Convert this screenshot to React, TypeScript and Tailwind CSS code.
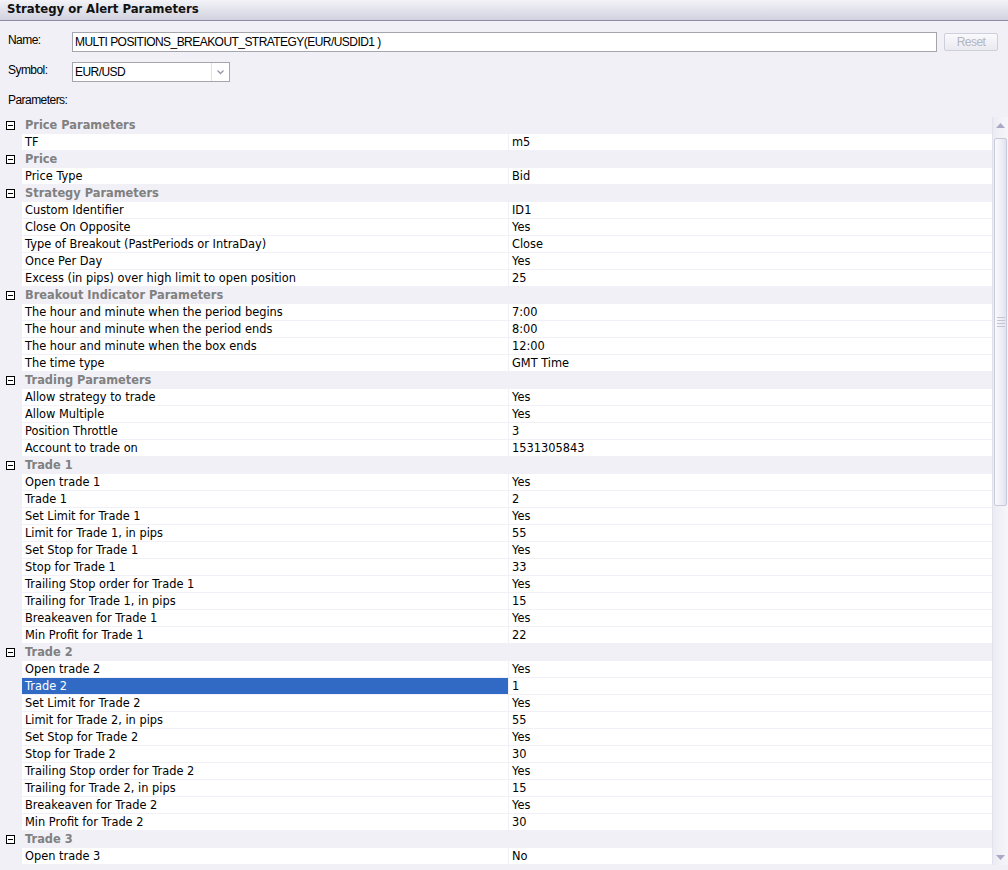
import React from "react";

type Row = { cat: string } | { label: string; value: string; selected?: boolean };

const rows: Row[] = [
  { cat: "Price Parameters" },
  { label: "TF", value: "m5" },
  { cat: "Price" },
  { label: "Price Type", value: "Bid" },
  { cat: "Strategy Parameters" },
  { label: "Custom Identifier", value: "ID1" },
  { label: "Close On Opposite", value: "Yes" },
  { label: "Type of Breakout (PastPeriods or IntraDay)", value: "Close" },
  { label: "Once Per Day", value: "Yes" },
  { label: "Excess (in pips) over high limit to open position", value: "25" },
  { cat: "Breakout Indicator Parameters" },
  { label: "The hour and minute when the period begins", value: "7:00" },
  { label: "The hour and minute when the period ends", value: "8:00" },
  { label: "The hour and minute when the box ends", value: "12:00" },
  { label: "The time type", value: "GMT Time" },
  { cat: "Trading Parameters" },
  { label: "Allow strategy to trade", value: "Yes" },
  { label: "Allow Multiple", value: "Yes" },
  { label: "Position Throttle", value: "3" },
  { label: "Account to trade on", value: "1531305843" },
  { cat: "Trade 1" },
  { label: "Open trade 1", value: "Yes" },
  { label: "Trade 1", value: "2" },
  { label: "Set Limit for Trade 1", value: "Yes" },
  { label: "Limit for Trade 1, in pips", value: "55" },
  { label: "Set Stop for Trade 1", value: "Yes" },
  { label: "Stop for Trade 1", value: "33" },
  { label: "Trailing Stop order for Trade 1", value: "Yes" },
  { label: "Trailing for Trade 1, in pips", value: "15" },
  { label: "Breakeaven for Trade 1", value: "Yes" },
  { label: "Min Profit for Trade 1", value: "22" },
  { cat: "Trade 2" },
  { label: "Open trade 2", value: "Yes" },
  { label: "Trade 2", value: "1", selected: true },
  { label: "Set Limit for Trade 2", value: "Yes" },
  { label: "Limit for Trade 2, in pips", value: "55" },
  { label: "Set Stop for Trade 2", value: "Yes" },
  { label: "Stop for Trade 2", value: "30" },
  { label: "Trailing Stop order for Trade 2", value: "Yes" },
  { label: "Trailing for Trade 2, in pips", value: "15" },
  { label: "Breakeaven for Trade 2", value: "Yes" },
  { label: "Min Profit for Trade 2", value: "30" },
  { cat: "Trade 3" },
  { label: "Open trade 3", value: "No" },
];

const narrow = { fontFamily: '"Liberation Sans", Arial, sans-serif' };
const grid = { fontFamily: '"DejaVu Sans", Verdana, sans-serif' };

function MinusBox() {
  return (
    <div className="w-[9px] h-[9px] border border-black bg-white flex items-center justify-center">
      <div className="w-[5px] h-px bg-black" />
    </div>
  );
}

function Scrollbar() {
  return (
    <div className="w-[16px] flex flex-col bg-gradient-to-r from-[#ebebf3] to-[#f6f6fa] border-l border-[#e2e2ec]">
      <div className="h-[16px] flex items-center justify-center">
        <svg width="9" height="5" viewBox="0 0 9 5">
          <path d="M4.5 0 L9 5 L0 5 Z" fill="#a9a9c6" />
        </svg>
      </div>
      <div className="h-[5px]" />
      <div className="h-[368px] mx-[1px] rounded-[2px] border border-[#c9c9dc] bg-gradient-to-r from-[#fbfbfd] to-[#e3e3ee] flex flex-col items-center justify-center gap-[2px]">
        <div className="w-[8px] h-px bg-[#c3c3d6]" />
        <div className="w-[8px] h-px bg-[#c3c3d6]" />
        <div className="w-[8px] h-px bg-[#c3c3d6]" />
        <div className="w-[8px] h-px bg-[#c3c3d6]" />
      </div>
      <div className="flex-1" />
      <div className="h-[16px] flex items-center justify-center">
        <svg width="9" height="5" viewBox="0 0 9 5">
          <path d="M0 0 L9 0 L4.5 5 Z" fill="#a9a9c6" />
        </svg>
      </div>
    </div>
  );
}

export default function App() {
  return (
    <div className="w-[1008px] h-[870px] bg-[#f1f0f6] flex flex-col overflow-hidden text-black">
      {/* Titre */}
      <div
        className="h-[21px] shrink-0 bg-gradient-to-b from-[#f3f3f8] to-[#d2d2df] border-b border-[#8d8ca8] flex items-center px-[7px] text-[11.7px] font-bold text-[#111]"
        style={{ fontFamily: '"DejaVu Sans", Tahoma, sans-serif' }}
      >
        Strategy or Alert Parameters
      </div>

      {/* Name */}
      <div className="flex items-center mt-[11px] h-[20px] text-[12px] tracking-[-0.55px]" style={narrow}>
        <div className="w-[72px] pl-[8px] -mt-[4px]">Name:</div>
        <div className="w-[865px] h-[20px] bg-white border border-[#a5a5ad] flex items-center pl-[2px]">
          MULTI POSITIONS_BREAKOUT_STRATEGY(EUR/USDID1 )
        </div>
        <button className="ml-[7px] w-[54px] h-[18px] rounded-[2px] border border-[#cfcfdc] bg-gradient-to-b from-[#fafafc] to-[#e9e9f0] text-[#b4b4be] text-[12px] flex items-center justify-center">
          Reset
        </button>
      </div>

      {/* Symbol */}
      <div className="flex items-center mt-[10px] h-[20px] text-[12px] tracking-[-0.55px]" style={narrow}>
        <div className="w-[72px] pl-[8px] -mt-[4px]">Symbol:</div>
        <div className="w-[158px] h-[20px] bg-white border border-[#a5a5ad] flex items-center">
          <div className="flex-1 pl-[2px]">EUR/USD</div>
          <div className="w-[18px] h-full border-l border-[#e0e0e8] flex items-center justify-center">
            <svg width="7" height="5" viewBox="0 0 7 5">
              <path d="M0.5 0.5 L3.5 3.5 L6.5 0.5" stroke="#9a9aa8" strokeWidth="1.4" fill="none" />
            </svg>
          </div>
        </div>
      </div>

      {/* Parameters */}
      <div className="mt-[11px] pl-[8px] text-[12px] tracking-[-0.55px] h-[14px] leading-[14px]" style={narrow}>
        Parameters:
      </div>

      {/* Grille */}
      <div className="mt-[10px] flex flex-1 min-h-0">
        <div className="flex-1 flex flex-col text-[11.4px]" style={grid}>
          {rows.map((r, i) =>
            "cat" in r ? (
              <div key={i} className="h-[17px] flex items-center">
                <div className="w-[22px] flex items-center justify-center pl-[2px] pr-[3px]">
                  <MinusBox />
                </div>
                <div className="pl-[3px] pt-px font-bold text-[#808080]">{r.cat}</div>
              </div>
            ) : (
              <div key={i} className="h-[17px] flex pb-px">
                <div className="w-[22px]" />
                <div
                  className={
                    r.selected
                      ? "w-[486px] bg-[#316ac5] text-white pl-[3px] pt-px flex items-center"
                      : "w-[486px] bg-white pl-[3px] pt-px flex items-center"
                  }
                >
                  {r.label}
                </div>
                <div className="ml-px flex-1 bg-white pl-[3px] pt-px flex items-center">{r.value}</div>
              </div>
            )
          )}
        </div>
        <div className="h-[748px] flex">
          <Scrollbar />
        </div>
      </div>
    </div>
  );
}
